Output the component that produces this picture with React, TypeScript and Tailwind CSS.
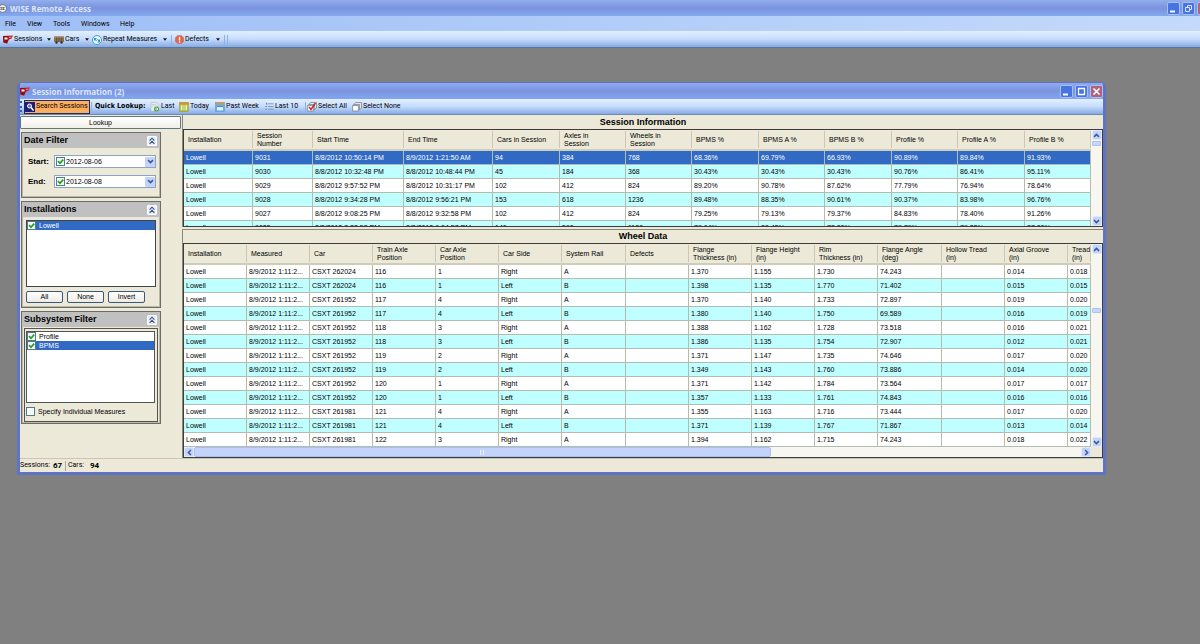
import React from "react";
import clsx from "clsx";

type Column = { label: string; width: string };

const sessionColumns: Column[] = [
    { label: "Installation", width: "w-[69px]" },
    { label: "Session\nNumber", width: "w-[60px]" },
    { label: "Start Time", width: "w-[91px]" },
    { label: "End Time", width: "w-[89px]" },
    { label: "Cars in Session", width: "w-[67px]" },
    { label: "Axles in\nSession", width: "w-[66px]" },
    { label: "Wheels in\nSession", width: "w-[66px]" },
    { label: "BPMS %", width: "w-[67px]" },
    { label: "BPMS A %", width: "w-[66px]" },
    { label: "BPMS B %", width: "w-[67px]" },
    { label: "Profile %", width: "w-[66px]" },
    { label: "Profile A %", width: "w-[67px]" },
    { label: "Profile B %", width: "w-[66px]" },
];

const sessionRows = [
    ["Lowell", "9031", "8/8/2012 10:50:14 PM", "8/9/2012 1:21:50 AM", "94", "384", "768", "68.36%", "69.79%", "66.93%", "90.89%", "89.84%", "91.93%"],
    ["Lowell", "9030", "8/8/2012 10:32:48 PM", "8/8/2012 10:48:44 PM", "45", "184", "368", "30.43%", "30.43%", "30.43%", "90.76%", "86.41%", "95.11%"],
    ["Lowell", "9029", "8/8/2012 9:57:52 PM", "8/8/2012 10:31:17 PM", "102", "412", "824", "89.20%", "90.78%", "87.62%", "77.79%", "76.94%", "78.64%"],
    ["Lowell", "9028", "8/8/2012 9:34:28 PM", "8/8/2012 9:56:21 PM", "153", "618", "1236", "89.48%", "88.35%", "90.61%", "90.37%", "83.98%", "96.76%"],
    ["Lowell", "9027", "8/8/2012 9:08:25 PM", "8/8/2012 9:32:58 PM", "102", "412", "824", "79.25%", "79.13%", "79.37%", "84.83%", "78.40%", "91.26%"],
    ["Lowell", "9025", "8/8/2012 8:28:58 PM", "8/8/2012 9:04:57 PM", "140", "560", "1120", "79.64%", "80.48%", "78.80%", "79.79%", "79.28%", "87.80%"],
];

const wheelColumns: Column[] = [
    { label: "Installation", width: "w-[63px]" },
    { label: "Measured", width: "w-[63px]" },
    { label: "Car", width: "w-[63px]" },
    { label: "Train Axle\nPosition", width: "w-[63px]" },
    { label: "Car Axle\nPosition", width: "w-[63px]" },
    { label: "Car Side", width: "w-[63px]" },
    { label: "System Rail", width: "w-[64px]" },
    { label: "Defects", width: "w-[63px]" },
    { label: "Flange\nThickness (in)", width: "w-[63px]" },
    { label: "Flange Height\n(in)", width: "w-[63px]" },
    { label: "Rim\nThickness (in)", width: "w-[63px]" },
    { label: "Flange Angle\n(deg)", width: "w-[64px]" },
    { label: "Hollow Tread\n(in)", width: "w-[63px]" },
    { label: "Axial Groove\n(in)", width: "w-[63px]" },
    { label: "Tread\n(in)", width: "w-[23px]" },
];

const measured = "8/9/2012 1:11:2...";

const wheelRows = [
    ["CSXT 262024", "116", "1", "Right", "A", "1.370", "1.155", "1.730", "74.243", "0.014", "0.018"],
    ["CSXT 262024", "116", "1", "Left", "B", "1.398", "1.135", "1.770", "71.402", "0.015", "0.015"],
    ["CSXT 261952", "117", "4", "Right", "A", "1.370", "1.140", "1.733", "72.897", "0.019", "0.020"],
    ["CSXT 261952", "117", "4", "Left", "B", "1.380", "1.140", "1.750", "69.589", "0.016", "0.019"],
    ["CSXT 261952", "118", "3", "Right", "A", "1.388", "1.162", "1.728", "73.518", "0.016", "0.021"],
    ["CSXT 261952", "118", "3", "Left", "B", "1.386", "1.135", "1.754", "72.907", "0.012", "0.021"],
    ["CSXT 261952", "119", "2", "Right", "A", "1.371", "1.147", "1.735", "74.646", "0.017", "0.020"],
    ["CSXT 261952", "119", "2", "Left", "B", "1.349", "1.143", "1.760", "73.886", "0.014", "0.020"],
    ["CSXT 261952", "120", "1", "Right", "A", "1.371", "1.142", "1.784", "73.564", "0.017", "0.017"],
    ["CSXT 261952", "120", "1", "Left", "B", "1.357", "1.133", "1.761", "74.843", "0.016", "0.016"],
    ["CSXT 261981", "121", "4", "Right", "A", "1.355", "1.163", "1.716", "73.444", "0.017", "0.020"],
    ["CSXT 261981", "121", "4", "Left", "B", "1.371", "1.139", "1.767", "71.867", "0.013", "0.014"],
    ["CSXT 261981", "122", "3", "Right", "A", "1.394", "1.162", "1.715", "74.243", "0.018", "0.022"],
].map((r) => ["Lowell", measured, ...r.slice(0, 5), "", ...r.slice(5, 9), "", ...r.slice(9)]);

/* ---------- icons ---------- */

const TrainIcon = () => (
    <svg viewBox="0 0 20 18" className="h-[9px] w-[10px] shrink-0">
        <path d="M0 2 L20 1 L17 7 L12 9 L8 17 L1 15 Z" fill="#c2161e" />
        <path d="M0 2 L10 2 L10 12 L8 17 L1 15 Z" fill="#8e0f17" />
        <path d="M3 5h6v4H3z" fill="#fff" />
        <path d="M12 5l5-1" stroke="#f3c9c9" strokeWidth="1.500" />
    </svg>
);

const CarIcon = () => (
    <svg viewBox="0 0 20 18" className="h-[9px] w-[10px] shrink-0">
        <rect x="0" y="2" width="20" height="12" fill="#86705a" />
        <rect x="0" y="2" width="20" height="3" fill="#b59a78" />
        <path d="M5 5v9M10 5v9M15 5v9" stroke="#5e4934" strokeWidth="1.500" />
        <circle cx="5" cy="15" r="2.500" fill="#3b332b" />
        <circle cx="15" cy="15" r="2.500" fill="#3b332b" />
    </svg>
);

const RepeatIcon = () => (
    <svg viewBox="0 0 20 20" className="size-[10px] shrink-0">
        <circle cx="10" cy="10" r="9" fill="#e8f6fd" stroke="#4b9bcb" strokeWidth="2" />
        <path d="M5 11 V7 H9 M5 7 L9 12 M15 9 V14 H11 M15 14 L11 8" fill="none" stroke="#2490cf" strokeWidth="2" />
    </svg>
);

const DefectIcon = () => (
    <svg viewBox="0 0 20 20" className="size-[9px] shrink-0">
        <path d="M6 1h8l5 5v8l-5 5H6l-5-5V6z" fill="#e0664c" stroke="#c9553f" />
        <path d="M10 4v8M10 14v3" stroke="#fff" strokeWidth="3" />
    </svg>
);

const SearchIcon = () => (
    <svg viewBox="0 0 20 20" className="size-[10px] shrink-0">
        <rect width="20" height="20" fill="#1d1f77" />
        <circle cx="9" cy="8" r="4" fill="#5a6fc9" stroke="#fff" strokeWidth="2" />
        <path d="M12 11l5 6" stroke="#fff" strokeWidth="3" />
    </svg>
);

const LastIcon = () => (
    <svg viewBox="0 0 20 20" className="size-[10px] shrink-0">
        <path d="M2 1h11l3 3v14H2z" fill="#e3ece9" stroke="#a3b7c2" />
        <path d="M4 5h8M4 8h8" stroke="#a9c0ce" />
        <circle cx="13" cy="14" r="5" fill="#4f9a3c" />
        <path d="M10 14h6M13 11l3 3-3 3" fill="none" stroke="#e5f6dc" strokeWidth="2" />
    </svg>
);

const TodayIcon = () => (
    <svg viewBox="0 0 20 20" className="size-[10px] shrink-0">
        <rect x="1" y="1" width="18" height="18" fill="#b6c33a" stroke="#8c9436" />
        <rect x="1" y="1" width="18" height="4" fill="#d98a3c" />
        <rect x="4" y="7" width="12" height="9" fill="#f7fbd0" />
        <path d="M8 7v9M12 7v9" stroke="#8fae2c" strokeWidth="2" />
    </svg>
);

const WeekIcon = () => (
    <svg viewBox="0 0 20 20" className="size-[10px] shrink-0">
        <rect x="1" y="1" width="18" height="18" fill="#6aa9dd" stroke="#5c8fbd" />
        <rect x="1" y="1" width="18" height="4" fill="#cf9a52" />
        <rect x="4" y="7" width="12" height="10" fill="#d9eefb" />
        <rect x="4" y="7" width="12" height="3" fill="#3f8fd0" />
    </svg>
);

const ListIcon = () => (
    <svg viewBox="0 0 20 20" className="size-[9px] shrink-0">
        <path d="M7 4h12M7 10h12M7 16h12" stroke="#7b93b8" strokeWidth="2" />
        <path d="M2 3h2v3M1 10h3M1 16h3" fill="none" stroke="#47699c" strokeWidth="2" />
    </svg>
);

const StackIcon = ({ checked = false }: { checked?: boolean }) => (
    <svg viewBox="0 0 20 20" className="size-[10px] shrink-0">
        <path d="M7 1h12v11l-4 3H3V6z" fill="#e4e6e8" stroke="#77808c" strokeWidth="1.500" />
        <rect x="1.500" y="7" width="11" height="11" fill="#fff" stroke="#77808c" strokeWidth="1.500" />
        <path d="M4 5h11v10" fill="none" stroke="#77808c" strokeWidth="1.500" />
        {checked && <path d="M4 10l4 5L17 2" fill="none" stroke="#cc2a20" strokeWidth="3" />}
    </svg>
);

const Chevron = ({ dir }: { dir: "up" | "down" | "left" | "right" }) => (
    <svg
        viewBox="0 0 10 10"
        className={clsx("size-[7px]", {
            "rotate-180": dir === "up",
            "rotate-90": dir === "left",
            "-rotate-90": dir === "right",
        })}
    >
        <path d="M1.500 3L5 6.500L8.500 3" fill="none" stroke="#3f5a8f" strokeWidth="2.200" />
    </svg>
);

/* ---------- window chrome ---------- */

const WindowButton = ({ kind }: { kind: "Minimize" | "Restore" | "Maximize" | "Close" }) => (
    <button
        aria-label={kind}
        className={clsx(
            "flex size-[13px] shrink-0 items-center justify-center rounded-[2px] border border-[#a9c0f3]",
            kind === "Close" ? "bg-[#b0647b]" : "bg-[#4674e2]"
        )}
    >
        <svg viewBox="0 0 11 11" className="size-[11px]" fill="none" stroke="#fff">
            {kind === "Minimize" && <path d="M2 8.500h5" strokeWidth="2" />}
            {kind === "Maximize" && <path d="M2.500 2v6.500h6V2M2 2.500h7" strokeWidth="1.300" />}
            {kind === "Restore" && <path d="M4.500 4V2.500h4v4H7M2.500 4.500h4v4h-4z" stroke="#d9e4fc" />}
            {kind === "Close" && <path d="M2.500 2.500l6 6M8.500 2.500l-6 6" strokeWidth="1.600" />}
        </svg>
    </button>
);

const Separator = () => <span className="mx-px h-[10px] w-px shrink-0 bg-[#8fb0e0]" />;

interface ToolButtonProps {
    icon: React.ReactNode;
    label: string;
    width: string;
    menu?: boolean;
}

const ToolButton: React.FC<ToolButtonProps> = ({ icon, label, width, menu }) => (
    <button className={clsx("flex shrink-0 items-center gap-px whitespace-nowrap", width)}>
        {icon}
        <span>{label}</span>
        {menu && (
            <svg viewBox="0 0 6 4" className="mr-[3px] ml-auto h-[3px] w-[4px]">
                <path d="M0 0h6L3 4z" fill="#111" />
            </svg>
        )}
    </button>
);

/* ---------- side panel ---------- */

interface CheckProps {
    label: string;
    hideLabel?: boolean;
    checked?: boolean;
    selected?: boolean;
}

const Check: React.FC<CheckProps> = ({ label, hideLabel, checked = false, selected }) => (
    <label className={clsx("flex h-[9px] items-center", !hideLabel && "w-full")}>
        <span className="grid size-[9px] shrink-0">
            <input
                type="checkbox"
                defaultChecked={checked}
                aria-label={label}
                className="peer col-start-1 row-start-1 size-[9px] appearance-none border border-[#4f7a94] bg-[#f8f8f4]"
            />
            <svg viewBox="0 0 9 9" className="pointer-events-none invisible col-start-1 row-start-1 size-[9px] peer-checked:visible">
                <path d="M2 4.200L4 6.300L7.200 2.600" fill="none" stroke="#21a121" strokeWidth="1.700" />
            </svg>
        </span>
        {!hideLabel && (
            <span className={clsx("flex h-[9px] flex-1 items-center pl-[3px]", selected && "bg-[#316ac5] text-white")}>
                {label}
            </span>
        )}
    </label>
);

const Group = ({ title, children }: { title: string; children: React.ReactNode }) => (
    <section className="border border-[#6d6d68] shadow-[inset_0_0_0_1px_#b9b7aa]">
        <header className="flex h-[15px] items-center justify-between bg-[#c0c0c0] pr-[3px] pl-[2px]">
            <h2 className="text-[9px] font-bold">{title}</h2>
            <button
                aria-label={`Collapse ${title}`}
                className="flex size-[10px] items-center justify-center rounded-[1px] border border-white bg-[#e9eef8]"
            >
                <svg viewBox="0 0 10 10" className="size-[8px]" fill="none" stroke="#35507f" strokeWidth="1.400">
                    <path d="M2 4.500L5 1.500L8 4.500M2 8.500L5 5.500L8 8.500" />
                </svg>
            </button>
        </header>
        {children}
    </section>
);

const DateField = ({ id, label, value }: { id: string; label: string; value: string }) => (
    <div className="flex h-[13px] items-center">
        <label htmlFor={id} className="w-[26px] text-[8px] font-bold">
            {label}
        </label>
        <div className="flex h-[13px] min-w-0 flex-1 items-center border border-[#8aa5c4] bg-white pl-px">
            <Check label={`Use ${label}`} hideLabel checked />
            <input id={id} defaultValue={value} className="min-w-0 flex-1 pl-px" />
            <button aria-label={`Pick ${label}`} className="flex h-[10px] w-[10px] items-center justify-center rounded-[1px] bg-[#c3d3fc]">
                <Chevron dir="down" />
            </button>
        </div>
    </div>
);

const SmallButton = ({ children }: { children: React.ReactNode }) => (
    <button className="h-[12px] w-[37px] rounded-[2px] border border-[#3c5a78] bg-linear-to-b from-white to-[#ecebe5] leading-[10px]">
        {children}
    </button>
);

/* ---------- grids ---------- */

const ScrollButton = ({ dir }: { dir: "up" | "down" | "left" | "right" }) => (
    <button
        aria-label={`Scroll ${dir}`}
        className="flex size-[10px] shrink-0 items-center justify-center rounded-[2px] border border-[#dfe8fd] bg-[#c3d3fc]"
    >
        <Chevron dir={dir} />
    </button>
);

const VScroll = ({ thumb }: { thumb: string }) => (
    <div className="flex w-[11px] shrink-0 flex-col items-center justify-between bg-[#f7f6f1]">
        <ScrollButton dir="up" />
        <div className="w-full flex-1">
            <div className={clsx("mx-px rounded-[1px] border border-[#a9c0f0] bg-[#c6d6fd]", thumb)} />
        </div>
        <ScrollButton dir="down" />
    </div>
);

interface GridProps {
    name: string;
    columns: Column[];
    rows: string[][];
    selected?: number;
}

const Grid: React.FC<GridProps> = ({ name, columns, rows, selected }) => (
    <table aria-label={name} className="w-full table-fixed border-separate border-spacing-0 text-left">
        <colgroup>
            {columns.map((c) => (
                <col key={c.label} className={c.width} />
            ))}
        </colgroup>
        <thead>
            <tr className="h-[21px] bg-[#ece9d8]">
                {columns.map((c) => (
                    <th key={c.label} className="border-b-2 border-[#cfccba] p-0 font-normal">
                        <div className="flex h-[17px] items-center border-r border-[#cac7b5] pl-[4px] leading-[8px] whitespace-pre">
                            {c.label}
                        </div>
                    </th>
                ))}
            </tr>
        </thead>
        <tbody>
            {rows.map((row, i) => (
                <tr
                    key={i}
                    className={clsx(
                        "h-[14px]",
                        i === selected ? "bg-[#316ac5] text-white" : i % 2 ? "bg-[#c0ffff]" : "bg-white"
                    )}
                >
                    {row.map((cell, j) => (
                        <td
                            key={j}
                            className="overflow-hidden border-r border-b border-[#b4bcb0] p-0 pl-[2px] leading-[13px] whitespace-nowrap"
                        >
                            {cell}
                        </td>
                    ))}
                </tr>
            ))}
        </tbody>
    </table>
);

const SessionWindow = () => (
    <main className="mt-[34px] mr-[94px] ml-[17px] rounded-t-[5px] border-3 border-t border-[#6074c6] bg-[#ece9d8]">
        <div className="flex h-[16px] items-center rounded-t-[3px] bg-linear-to-b from-[#8fabef] via-[#7a94e0] to-[#82a6ef]">
            <TrainIcon />
            <h1 className="ml-[2px] font-['Open_Sans',sans-serif] text-[8px] font-bold text-[#dbe6fb]">
                Session Information (2)
            </h1>
            <div className="ml-auto flex gap-[2px]">
                <WindowButton kind="Minimize" />
                <WindowButton kind="Maximize" />
                <WindowButton kind="Close" />
            </div>
        </div>

        {/* Lookup toolbar */}
        <div className="flex h-[16px] items-center border-b border-[#7289ad] bg-linear-to-b from-[#e3efff] via-[#c6dcfd] to-[#86abe4] font-[Roboto,sans-serif]">
            <span className="h-[11px] border-l-2 border-dotted border-[#3c5f9e]" />
            <button className="ml-[2px] flex h-[14px] w-[66px] shrink-0 items-center gap-px border border-[#1b2a6b] bg-[#fdae5e] whitespace-nowrap">
                <SearchIcon />
                Search Sessions
            </button>
            <Separator />
            <span className="ml-[2px] w-[55px] shrink-0 font-['DejaVu_Sans_Condensed',sans-serif] font-bold whitespace-nowrap">
                Quick Lookup:
            </span>
            <ToolButton icon={<LastIcon />} label="Last" width="w-[29px]" />
            <ToolButton icon={<TodayIcon />} label="Today" width="w-[36px]" />
            <ToolButton icon={<WeekIcon />} label="Past Week" width="w-[50px]" />
            <ToolButton icon={<ListIcon />} label="Last 10" width="w-[39px]" />
            <Separator />
            <ToolButton icon={<StackIcon checked />} label="Select All" width="w-[45px]" />
            <ToolButton icon={<StackIcon />} label="Select None" width="w-[50px]" />
        </div>

        <div className="flex">
            <aside className="w-[162px] shrink-0 pt-px">
                <button className="block h-[13px] w-[161px] rounded-[1px] border border-[#5f7a7c] bg-linear-to-b from-white to-[#f0efe9] leading-[11px]">
                    Lookup
                </button>
                <div className="mt-[3px] ml-px flex w-[140px] flex-col gap-[3px]">
                    <Group title="Date Filter">
                        <div className="flex flex-col gap-[7px] pt-[7px] pr-[4px] pb-[9px] pl-[6px]">
                            <DateField id="start" label="Start:" value="2012-08-06" />
                            <DateField id="end" label="End:" value="2012-08-08" />
                        </div>
                    </Group>
                    <Group title="Installations">
                        <div className="px-[4px] pt-[3px] pb-[4px]">
                            <div className="h-[67px] border border-[#444] bg-white">
                                <Check label="Lowell" checked selected />
                            </div>
                            <div className="mt-[4px] flex gap-[4px]">
                                <SmallButton>All</SmallButton>
                                <SmallButton>None</SmallButton>
                                <SmallButton>Invert</SmallButton>
                            </div>
                        </div>
                    </Group>
                    <Group title="Subsystem Filter">
                        <div className="mx-[2px] my-px border border-[#55554f] px-px pt-[2px] pb-[5px]">
                            <div className="mr-px h-[72px] border border-[#555] bg-white">
                                <Check label="Profile" checked />
                                <Check label="BPMS" checked selected />
                            </div>
                            <div className="mt-[4px]">
                                <Check label="Specify Individual Measures" />
                            </div>
                        </div>
                    </Group>
                </div>
            </aside>

            <div className="min-w-0 flex-1">
                <section className="border-l border-[#8a8878]">
                    <h2 className="h-[14px] text-center text-[9px] leading-[14px] font-bold">Session Information</h2>
                    <div className="flex h-[98px] overflow-hidden border border-[#3c3c3c]">
                        <div className="min-w-0 flex-1 overflow-hidden">
                            <Grid name="Session Information" columns={sessionColumns} rows={sessionRows} selected={0} />
                        </div>
                        <VScroll thumb="mt-px h-[5px]" />
                    </div>
                </section>
                <section className="mt-[2px] border-t border-l border-[#8a8878]">
                    <h2 className="h-[13px] text-center text-[9px] leading-[13px] font-bold">Wheel Data</h2>
                    <div className="flex border border-[#3c3c3c] bg-[#ece9d8]">
                        <div className="min-w-0 flex-1 overflow-hidden">
                            <Grid name="Wheel Data" columns={wheelColumns} rows={wheelRows} />
                            <div className="flex h-[10px] items-center bg-[#f7f6f1]">
                                <ScrollButton dir="left" />
                                <div className="flex flex-1">
                                    <div className="flex h-[10px] w-[65%] items-center justify-center rounded-[2px] border border-[#a9c0f0] bg-[#c3d3fc]">
                                        <span className="h-[5px] w-[4px] border-x border-[#eef3ff]" />
                                    </div>
                                </div>
                                <ScrollButton dir="right" />
                            </div>
                        </div>
                        <div className="flex pb-[10px]">
                            <VScroll thumb="mt-[54px] h-[5px]" />
                        </div>
                    </div>
                </section>
            </div>
        </div>

        {/* Status bar */}
        <footer className="flex h-[14px] items-center border-t border-[#c9c6b4] font-[Roboto,sans-serif]">
            <span className="w-[33px]">Sessions:</span>
            <b className="w-[12px] text-[8px]">67</b>
            <span className="h-[10px] w-px bg-[#aca899]" />
            <span className="ml-[2px] w-[22px]">Cars:</span>
            <b className="text-[8px]">94</b>
        </footer>
    </main>
);

const App = () => (
    <div className="min-h-screen overflow-hidden bg-[#808080] font-['Liberation_Sans',Arial,sans-serif] text-[7px] leading-[9px] text-black">
        <div className="flex h-[16px] items-center bg-linear-to-b from-[#92aeec] via-[#7a93df] to-[#84a7ee]">
            <svg viewBox="0 0 16 20" className="h-[9px] w-[7px] shrink-0">
                <circle cx="6" cy="10" r="9" fill="#f3f3f3" stroke="#4a4a4a" strokeWidth="1.500" />
                <path d="M0 8h11M0 12h11M4 7v6M8 7v6" stroke="#555" strokeWidth="1.500" />
            </svg>
            <span className="ml-[3px] font-['Open_Sans',sans-serif] text-[8px] font-bold text-[#dbe6fb]">
                WISE Remote Access
            </span>
            <div className="-mr-[10px] ml-auto flex gap-[2px]">
                <WindowButton kind="Minimize" />
                <WindowButton kind="Restore" />
                <WindowButton kind="Close" />
            </div>
        </div>

        <nav className="flex h-[15px] items-center bg-linear-to-r from-[#9ebef6] to-[#c4dafa] pt-[2px] pl-[5px] font-[Roboto,sans-serif]">
            <button className="w-[22px] text-left">File</button>
            <button className="w-[26px] text-left">View</button>
            <button className="w-[28px] text-left">Tools</button>
            <button className="w-[39px] text-left">Windows</button>
            <button className="text-left">Help</button>
        </nav>

        <div className="flex h-[17px] items-center border-b border-[#5c7499] bg-linear-to-b from-[#e3efff] via-[#c6dcfd] to-[#86abe4] pt-px pl-[3px] font-[Roboto,sans-serif]">
            <ToolButton icon={<TrainIcon />} label="Sessions" width="w-[51px]" menu />
            <ToolButton icon={<CarIcon />} label="Cars" width="w-[38px]" menu />
            <ToolButton icon={<RepeatIcon />} label="Repeat Measures" width="w-[78px]" menu />
            <Separator />
            <span className="w-[2px]" />
            <ToolButton icon={<DefectIcon />} label="Defects" width="w-[48px]" menu />
            <Separator />
            <Separator />
        </div>

        <SessionWindow />
    </div>
);

export default App;
